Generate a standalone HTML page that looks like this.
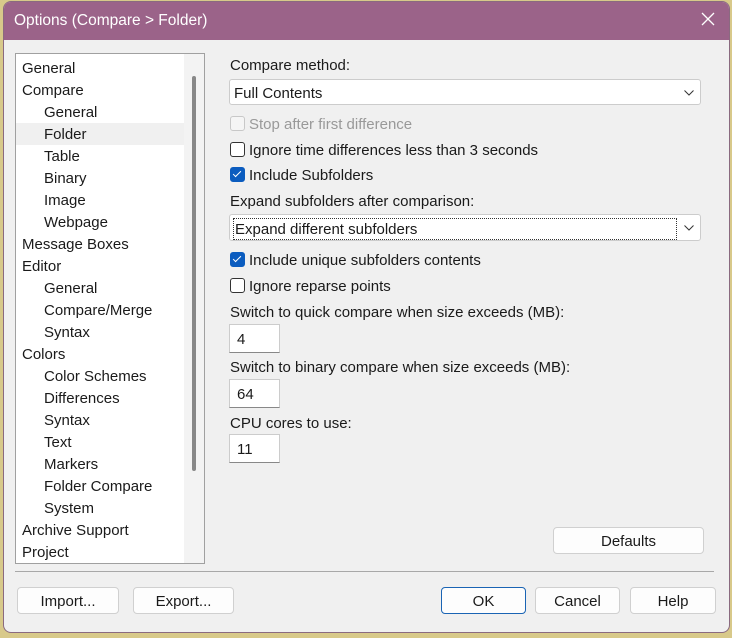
<!DOCTYPE html><html><head><style>
body{margin:0;width:732px;height:638px;background:#d8c98a;position:relative;overflow:hidden;font-family:"Liberation Sans",sans-serif;font-size:15px;color:#1a1a1a}
.win{position:absolute;left:4px;top:2px;width:725px;height:630px;background:#f0f0f0;border-radius:7px;overflow:hidden;box-shadow:0 0 0 1px #8a6a80}
.title{height:38px;background:#9b6389;color:#fff;font-size:15.5px;line-height:38px;padding-left:10px}
.x{position:absolute;right:14px;top:10px}
.a{position:absolute}
.tree{left:11px;top:51px;width:188px;height:509px;background:#fff;border:1px solid #a0a0a0}
.tree .it{position:absolute;height:22px;line-height:23px}
.sel{background:#f0f0f0}
.tree .sb{position:absolute;left:176px;top:22px;width:4px;height:395px;background:#888;border-radius:2px}
.tree .sbt{position:absolute;left:168px;top:0;width:20px;height:509px;background:#f3f3f3}
.lbl{position:absolute;left:226px;margin-top:2px}
.cb{position:absolute;left:226px;width:13px;height:13px;border:1px solid #333;border-radius:3px;background:#fff;margin-top:1px}
.cb.on{background:#0b5cbf;border-color:#0b5cbf}
.cb.on::after{content:"";position:absolute;left:4px;top:1px;width:3px;height:7px;border:solid #fff;border-width:0 1.5px 1.5px 0;transform:rotate(45deg)}
.cb.dis{border-color:#c8c8c8;background:#f5f5f5}
.combo{position:absolute;left:225px;height:26px;background:#fff;border:1px solid #ccc;border-radius:3px;line-height:27px;padding-left:4px;box-sizing:border-box;width:472px}
.combo svg{position:absolute;right:6px;top:10px}
.ed{position:absolute;left:225px;width:51px;height:29px;background:#fff;border:1px solid #ccc;border-bottom:1px solid #888;box-sizing:border-box;line-height:30px;padding-left:7px}
.btn{position:absolute;height:27px;background:#fdfdfd;border:1px solid #d0d0d0;border-radius:4px;box-sizing:border-box;text-align:center;line-height:28px}
</style></head><body>
<div class="win">
<div class="title">Options (Compare &gt; Folder)</div><svg class="x" width="14" height="14"><path d="M1 1L13 13M13 1L1 13" stroke="#fff" stroke-width="1.3"/></svg>
<div class="a tree">
<div class="sbt"></div><div class="sb"></div>
<div class="it" style="left:6px;top:3px">General</div>
<div class="it" style="left:6px;top:25px">Compare</div>
<div class="it" style="left:28px;top:47px">General</div>
<div class="it sel" style="left:0;top:69px;width:168px"><span style="padding-left:28px">Folder</span></div>
<div class="it" style="left:28px;top:91px">Table</div>
<div class="it" style="left:28px;top:113px">Binary</div>
<div class="it" style="left:28px;top:135px">Image</div>
<div class="it" style="left:28px;top:157px">Webpage</div>
<div class="it" style="left:6px;top:179px">Message Boxes</div>
<div class="it" style="left:6px;top:201px">Editor</div>
<div class="it" style="left:28px;top:223px">General</div>
<div class="it" style="left:28px;top:245px">Compare/Merge</div>
<div class="it" style="left:28px;top:267px">Syntax</div>
<div class="it" style="left:6px;top:289px">Colors</div>
<div class="it" style="left:28px;top:311px">Color Schemes</div>
<div class="it" style="left:28px;top:333px">Differences</div>
<div class="it" style="left:28px;top:355px">Syntax</div>
<div class="it" style="left:28px;top:377px">Text</div>
<div class="it" style="left:28px;top:399px">Markers</div>
<div class="it" style="left:28px;top:421px">Folder Compare</div>
<div class="it" style="left:28px;top:443px">System</div>
<div class="it" style="left:6px;top:465px">Archive Support</div>
<div class="it" style="left:6px;top:487px">Project</div>
</div>
<div class="lbl" style="top:53px">Compare method:</div>
<div class="combo" style="top:77px">Full Contents<svg width="10" height="6"><path d="M0.5 0.5L5 5L9.5 0.5" fill="none" stroke="#333"/></svg></div>
<div class="cb dis" style="top:113px"></div><div class="lbl" style="left:245px;top:112px;color:#999">Stop after first difference</div>
<div class="cb" style="top:139px"></div><div class="lbl" style="left:245px;top:138px">Ignore time differences less than 3 seconds</div>
<div class="cb on" style="top:164px"></div><div class="lbl" style="left:245px;top:163px">Include Subfolders</div>
<div class="lbl" style="top:189px">Expand subfolders after comparison:</div>
<div class="combo" style="top:212px;height:27px;line-height:29px">
<span style="display:inline-block;border:1px dotted #333;width:441px;height:20px;line-height:21px;margin-top:3px;vertical-align:top;position:absolute;left:3px;top:0;padding-left:1px">Expand different subfolders</span><svg width="10" height="6" style="top:10px"><path d="M0.5 0.5L5 5L9.5 0.5" fill="none" stroke="#333"/></svg></div>
<div class="cb on" style="top:249px"></div><div class="lbl" style="left:245px;top:248px">Include unique subfolders contents</div>
<div class="cb" style="top:275px"></div><div class="lbl" style="left:245px;top:274px">Ignore reparse points</div>
<div class="lbl" style="top:300px">Switch to quick compare when size exceeds (MB):</div>
<div class="ed" style="top:322px">4</div>
<div class="lbl" style="top:355px">Switch to binary compare when size exceeds (MB):</div>
<div class="ed" style="top:377px">64</div>
<div class="lbl" style="top:411px">CPU cores to use:</div>
<div class="ed" style="top:432px">11</div>
<div class="btn" style="left:549px;top:525px;width:151px">Defaults</div>
<div class="a" style="left:11px;top:569px;width:699px;height:1px;background:#a8a8a8"></div>
<div class="btn" style="left:13px;top:585px;width:102px">Import...</div>
<div class="btn" style="left:129px;top:585px;width:101px">Export...</div>
<div class="btn" style="left:437px;top:585px;width:85px;border-color:#1a64b4">OK</div>
<div class="btn" style="left:531px;top:585px;width:85px">Cancel</div>
<div class="btn" style="left:626px;top:585px;width:86px">Help</div>
</div>
</body></html>
